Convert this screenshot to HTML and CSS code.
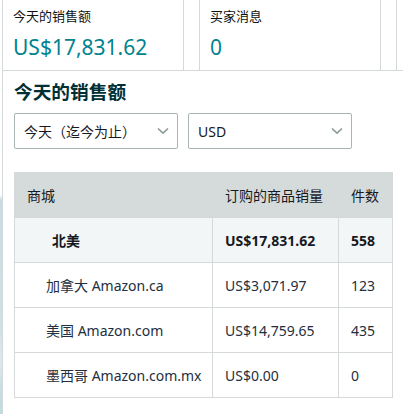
FILE: index.html
```html
<!DOCTYPE html>
<html lang="zh">
<head>
<meta charset="utf-8">
<link rel="stylesheet" href="styles.css">
</head>
<body>
<div class="page">
  <div class="strip"></div>
  <div class="main">
    <div class="cards">
      <div class="card">
        <div class="card-label">今天的销售额</div>
        <div class="card-value">US$17,831.62</div>
      </div>
      <div class="card">
        <div class="card-label">买家消息</div>
        <div class="card-value">0</div>
      </div>
      <div class="card card-stub"></div>
    </div>
    <div class="panel">
      <h2 class="panel-title">今天的销售额</h2>
      <div class="filters">
        <div class="select">
          <span>今天<span class="paren">（</span>迄今为止<span class="paren">）</span></span>
          <svg class="chev" width="12" height="8" viewBox="0 0 12 8"><polyline points="1,1.5 6,6.2 11,1.5" fill="none" stroke="#8b9a9b" stroke-width="1.6"/></svg>
        </div>
        <div class="select">
          <span>USD</span>
          <svg class="chev" width="12" height="8" viewBox="0 0 12 8"><polyline points="1,1.5 6,6.2 11,1.5" fill="none" stroke="#8b9a9b" stroke-width="1.6"/></svg>
        </div>
      </div>
      <table class="sales">
        <colgroup>
          <col class="c1"><col class="c2"><col class="c3">
        </colgroup>
        <thead>
          <tr><th>商城</th><th>订购的商品销量</th><th>件数</th></tr>
        </thead>
        <tbody>
          <tr class="group"><td class="region">北美</td><td>US$17,831.62</td><td>558</td></tr>
          <tr><td class="market">加拿大 Amazon.ca</td><td>US$3,071.97</td><td>123</td></tr>
          <tr><td class="market">美国 Amazon.com</td><td>US$14,759.65</td><td>435</td></tr>
          <tr><td class="market">墨西哥 Amazon.com.mx</td><td>US$0.00</td><td>0</td></tr>
        </tbody>
      </table>
    </div>
  </div>
</div>
</body>
</html>
```
FILE: styles.css
```css
html, body {
  margin: 0;
  padding: 0;
  background: #fff;
}
body {
  font-family: "Noto Sans", "Noto Sans CJK SC", sans-serif;
  color: #0f1111;
  width: 403px;
  height: 414px;
  overflow: hidden;
}
.page {
  display: flex;
  height: 414px;
}
.strip {
  width: 2px;
  flex: none;
  background: linear-gradient(to bottom, #ffffff 0px, #ffffff 195px, #c7dbe6 200px, #cfe0ea 330px, #dde8ee 360px, #c4dde6 390px, #bfdbe2 414px);
}
.main {
  flex: 1;
  min-width: 0;
}
.cards {
  display: flex;
  gap: 15px;
  height: 70px;
}
.card {
  width: 182px;
  flex: none;
  border-left: 1px solid #d5d9d9;
  border-right: 1px solid #d5d9d9;
  padding: 0 0 0 10px;
  box-sizing: border-box;
}
.card-stub {
  width: 20px;
  border-right: none;
}
.card-label {
  font-size: 13px;
  line-height: 18px;
  padding-top: 7px;
  color: #0f1111;
}
.card-value {
  font-size: 21px;
  line-height: 28px;
  margin-top: 8px;
  color: #00838f;
}
.panel {
  border-top: 1px solid #d5d9d9;
  border-left: 1px solid #d5d9d9;
  padding: 0 11px;
  height: 343px;
}
.panel-title {
  margin: 0;
  font-size: 18.7px;
  font-weight: 700;
  line-height: 26px;
  padding-top: 8px;
  color: #002f36;
}
.filters {
  display: flex;
  gap: 10px;
  margin-top: 8px;
}
.select {
  width: 164px;
  height: 36px;
  box-sizing: border-box;
  border: 1px solid #a9b5b6;
  border-radius: 2px;
  display: flex;
  align-items: center;
  justify-content: space-between;
  padding: 0 8px 0 9px;
  font-size: 14px;
  color: #16191f;
}
.paren {
  font-family: "Noto Sans CJK TC", sans-serif;
}
.chev {
  display: block;
}
.sales {
  margin-top: 23px;
  border-collapse: collapse;
  table-layout: fixed;
  width: 378px;
  border: 1px solid #d5d9d9;
  font-size: 14px;
}
.c1 { width: 198px; }
.c2 { width: 126px; }
.c3 { width: 54px; }
.sales th, .sales td {
  border: 1px solid #d5d9d9;
  height: 45px;
  padding: 0 0 0 12px;
  text-align: left;
  white-space: nowrap;
  box-sizing: border-box;
}
.sales th {
  background: #d5dbdb;
  font-weight: 400;
  color: #16191f;
}
.sales td {
  color: #232f3e;
}
.sales tr.group td {
  background: #f3f6f6;
  font-weight: 700;
  color: #16191f;
}
.sales td.region {
  padding-left: 37px;
  color: #002f36;
}
.sales td.market {
  padding-left: 31px;
}
```
